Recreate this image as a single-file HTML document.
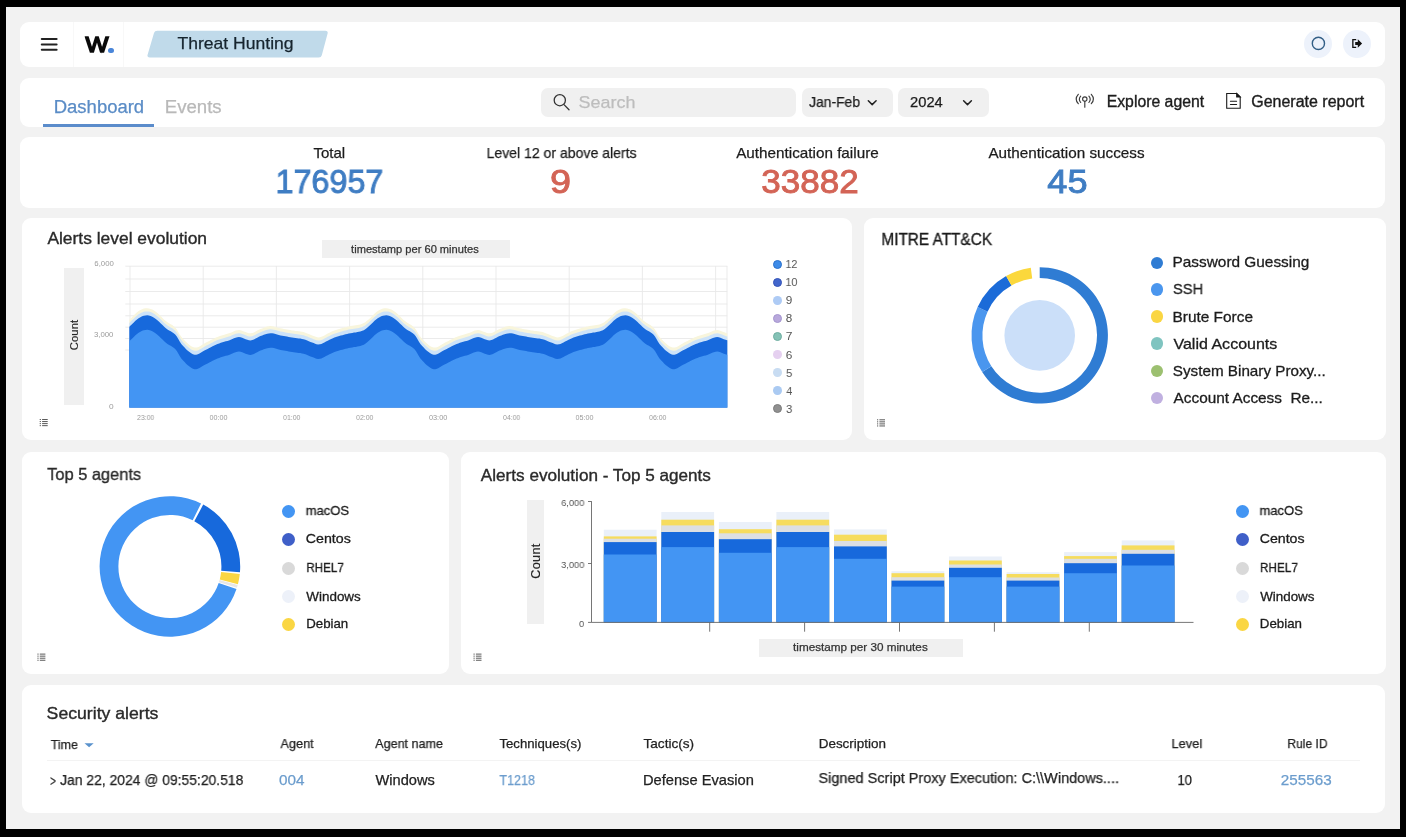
<!DOCTYPE html>
<html lang="en"><head><meta charset="utf-8"><title>Threat Hunting</title><style>
html,body{margin:0;padding:0;background:#000;}
body{width:1406px;height:837px;position:relative;overflow:hidden;font-family:"Liberation Sans",sans-serif;}
.b{position:absolute;display:block;}
.card{position:absolute;background:#fff;}
.t{position:absolute;white-space:pre;will-change:transform;transform-origin:0 0;}
</style></head>
<body>
<div class="b" style="left:6px;top:7px;width:1394px;height:822px;background:#f2f2f2"></div>
<header aria-label="Top bar">
<div class="card" style="left:20px;top:21.5px;width:1364.5px;height:45.5px;border-radius:9px"></div>
<svg class="b" style="left:38px;top:34px" width="24" height="22" viewBox="38 34 24 22">
<g stroke="#222" stroke-width="2.05" stroke-linecap="round"><line x1="41.8" y1="39" x2="56.6" y2="39"/><line x1="41.8" y1="44.4" x2="56.6" y2="44.4"/><line x1="41.8" y1="49.8" x2="56.6" y2="49.8"/></g></svg>
<div class="b" style="left:73.2px;top:22px;width:1px;height:45px;background:#f8f8f8;"></div>
<div class="b" style="left:123.4px;top:22px;width:1px;height:45px;background:#f8f8f8;"></div>
<div class="b" style="left:108.3px;top:47.8px;width:5.4px;height:5.4px;border-radius:50%;background:#4a86d9"></div>
<svg class="b" style="left:140px;top:26px" width="200" height="36" viewBox="140 26 200 36"><path d="M157.2 30.8 L325.5 30.8 Q328.3 30.8 327.6 33.4 L321.8 55.2 Q321.2 57.4 318.8 57.4 L149.6 57.4 Q146.8 57.4 147.6 54.8 L154 33 Q154.7 30.8 157.2 30.8 Z" fill="#c0daea"/></svg>
<div class="b" style="left:1304.2px;top:29.5px;width:28px;height:28px;border-radius:50%;background:#edf2fb"></div>
<div class="b" style="left:1343.4px;top:29.5px;width:28px;height:28px;border-radius:50%;background:#edf2fb"></div>
<svg class="b" style="left:1304px;top:29px" width="70" height="30" viewBox="1304 29 70 30">
<circle cx="1318.4" cy="43.4" r="6.1" fill="none" stroke="#335f86" stroke-width="1.4"/>
<path d="M1352.2 39 h4 v1.3 h-2.7 v6.4 h2.7 v1.3 h-4 z" fill="#111"/>
<path d="M1355.2 41.9 h2.6 v-2.6 l4.3 4.2 l-4.3 4.2 v-2.6 h-2.6 z" fill="#111"/>
</svg>
<span class="t" style="left:85px;top:33px;font-size:22.5px;line-height:23px;transform:translate(0.51px,0) scaleX(1.0796);-webkit-text-stroke:1.6px;color:#0a0a0a;">W</span>
<span class="t" style="left:177px;top:35px;font-size:17px;line-height:17px;transform:translate(0.50px,0) scaleX(1.0325);-webkit-text-stroke:0.25px;color:#16242e;">Threat Hunting</span>
</header>
<nav aria-label="Toolbar">
<div class="card" style="left:20px;top:78px;width:1364.5px;height:49px;border-radius:9px"></div>
<div class="b" style="left:42.6px;top:124px;width:111.2px;height:3px;background:#5b8ccb;"></div>
<div class="b" style="left:540.5px;top:87.5px;width:255.5px;height:29px;background:#f0f0f0;border-radius:7px;"></div>
<div class="b" style="left:801.7px;top:87.5px;width:91.1px;height:29px;background:#f0f0f0;border-radius:7px;"></div>
<div class="b" style="left:898px;top:87.5px;width:90.8px;height:29px;background:#f0f0f0;border-radius:7px;"></div>
<svg class="b" style="left:548px;top:90px" width="24" height="24" viewBox="548 90 24 24"><circle cx="559.8" cy="100.2" r="5.6" fill="none" stroke="#333" stroke-width="1.3"/><line x1="564" y1="104.6" x2="569" y2="109.8" stroke="#333" stroke-width="1.3" stroke-linecap="round"/></svg>
<svg class="b" style="left:860px;top:94px" width="120" height="16" viewBox="860 94 120 16"><g fill="none" stroke="#222" stroke-width="1.5" stroke-linecap="round" stroke-linejoin="round"><path d="M868.3 100.7 l3.9 3.9 l3.9 -3.9"/><path d="M963.6 100.7 l3.9 3.9 l3.9 -3.9"/></g></svg>
<svg class="b" style="left:1072px;top:90px" width="26" height="22" viewBox="1072 90 26 22"><g fill="none" stroke="#3c3c3c" stroke-width="1.15" stroke-linecap="round">
<circle cx="1084.8" cy="99" r="2.2"/><line x1="1084.8" y1="101.3" x2="1084.8" y2="107.2"/>
<path d="M1080.7 96.2 Q1078 99.3 1080.7 102.5"/><path d="M1088.9 96.2 Q1091.6 99.3 1088.9 102.5"/>
<path d="M1078.3 94.3 Q1074.1 99 1078.3 103.7"/><path d="M1091.3 94.3 Q1095.5 99 1091.3 103.7"/></g></svg>
<svg class="b" style="left:1222px;top:90px" width="24" height="24" viewBox="1222 90 24 24"><g fill="none" stroke="#1a1a1a" stroke-width="1.1" stroke-linejoin="miter" stroke-linecap="round">
<path d="M1226.7 93.5 H1236.7 L1240.2 97 V108.3 H1226.7 Z"/><path d="M1236.7 93.5 V97 H1240.2 Z" fill="#1a1a1a"/><line x1="1230.4" y1="101.3" x2="1236.6" y2="101.3"/><line x1="1230.4" y1="104.5" x2="1236.6" y2="104.5"/></g></svg>
<span class="t" style="left:53px;top:98px;font-size:18px;line-height:18px;transform:translate(0.76px,0) scaleX(1.0263);-webkit-text-stroke:0.25px;color:#5a8cc6;">Dashboard</span>
<span class="t" style="left:164px;top:98px;font-size:18px;line-height:18px;transform:translate(0.75px,0) scaleX(1.0331);-webkit-text-stroke:0.25px;color:#b9b9b9;">Events</span>
<span class="t" style="left:578px;top:94px;font-size:17px;line-height:17px;transform:translate(0.61px,0) scaleX(1.0547);-webkit-text-stroke:0.25px;color:#bdbdbd;">Search</span>
<span class="t" style="left:809px;top:95px;font-size:14.5px;line-height:15px;transform:translate(0.12px,0) scaleX(0.9552);-webkit-text-stroke:0.25px;color:#1c1c1c;">Jan-Feb</span>
<span class="t" style="left:910px;top:95px;font-size:14.5px;line-height:15px;transform:translate(0.04px,0) scaleX(1.0156);-webkit-text-stroke:0.25px;color:#1c1c1c;">2024</span>
<span class="t" style="left:1106px;top:94px;font-size:15.6px;line-height:16px;transform:translate(0.68px,0) scaleX(1.0127);-webkit-text-stroke:0.35px;color:#1c1c1c;">Explore agent</span>
<span class="t" style="left:1251px;top:94px;font-size:15.6px;line-height:16px;transform:translate(0.21px,0) scaleX(1.0253);-webkit-text-stroke:0.35px;color:#1c1c1c;">Generate report</span>
</nav>
<section aria-label="Summary statistics">
<div class="card" style="left:20px;top:137px;width:1364.5px;height:71px;border-radius:9px"></div>
<span class="t" style="left:313px;top:146px;font-size:14.8px;line-height:15px;transform:translate(0.44px,0) scaleX(1.0156);-webkit-text-stroke:0.25px;color:#1c1c1c;">Total</span>
<span class="t" style="left:275px;top:165px;font-size:33.6px;line-height:34px;transform:translate(0.53px,0) scaleX(0.9627);-webkit-text-stroke:0.9px;color:#3f7dc3;">176957</span>
<span class="t" style="left:486px;top:146px;font-size:14.8px;line-height:15px;transform:translate(0.55px,0) scaleX(0.9499);-webkit-text-stroke:0.25px;color:#1c1c1c;">Level 12 or above alerts</span>
<span class="t" style="left:549px;top:165px;font-size:33.6px;line-height:34px;transform:translate(0.88px,0) scaleX(1.1246);-webkit-text-stroke:0.9px;color:#d36456;">9</span>
<span class="t" style="left:736px;top:146px;font-size:14.8px;line-height:15px;transform:translate(0.14px,0) scaleX(1.0316);-webkit-text-stroke:0.25px;color:#1c1c1c;">Authentication failure</span>
<span class="t" style="left:761px;top:165px;font-size:33.6px;line-height:34px;transform:translate(0.33px,0) scaleX(1.0429);-webkit-text-stroke:0.9px;color:#d36456;">33882</span>
<span class="t" style="left:988px;top:146px;font-size:14.8px;line-height:15px;transform:translate(0.42px,0) scaleX(1.0315);-webkit-text-stroke:0.25px;color:#1c1c1c;">Authentication success</span>
<span class="t" style="left:1047px;top:165px;font-size:33.6px;line-height:34px;transform:translate(0.35px,0) scaleX(1.0765);-webkit-text-stroke:0.9px;color:#3f7dc3;">45</span>
</section>
<section aria-label="Alerts level evolution">
<div class="card" style="left:22px;top:218px;width:830.2px;height:222px;border-radius:9px"></div>
<svg class="b" style="left:37px;top:417px" width="14" height="12" viewBox="37 417 14 12"><g fill="#5a5a5a"><rect x="39.70" y="419.00" width="1.2" height="1"/><rect x="42.10" y="419.00" width="5.6" height="1"/><rect x="39.70" y="421.05" width="1.2" height="1"/><rect x="42.10" y="421.05" width="5.6" height="1"/><rect x="39.70" y="423.10" width="1.2" height="1"/><rect x="42.10" y="423.10" width="5.6" height="1"/><rect x="39.70" y="425.15" width="1.2" height="1"/><rect x="42.10" y="425.15" width="5.6" height="1"/></g></svg>
<svg class="b" style="left:60px;top:255px" width="700" height="175" viewBox="60 255 700 175"><defs><clipPath id="ac"><rect x="129.3" y="266" width="598.0" height="141.8"/></clipPath></defs><g stroke="#e9e9e9" stroke-width="0.9"><line x1="125.3" y1="266.2" x2="727.3" y2="266.2"/><line x1="125.3" y1="279" x2="727.3" y2="279"/><line x1="125.3" y1="291.5" x2="727.3" y2="291.5"/><line x1="125.3" y1="304" x2="727.3" y2="304"/><line x1="125.3" y1="315.8" x2="727.3" y2="315.8"/><line x1="125.3" y1="327.2" x2="727.3" y2="327.2"/><line x1="125.3" y1="338.5" x2="727.3" y2="338.5"/><line x1="125.3" y1="350" x2="727.3" y2="350"/><line x1="130" y1="266" x2="130" y2="407.8"/><line x1="203.2" y1="266" x2="203.2" y2="407.8"/><line x1="276.4" y1="266" x2="276.4" y2="407.8"/><line x1="349.6" y1="266" x2="349.6" y2="407.8"/><line x1="422.8" y1="266" x2="422.8" y2="407.8"/><line x1="496" y1="266" x2="496" y2="407.8"/><line x1="569.2" y1="266" x2="569.2" y2="407.8"/><line x1="642.4" y1="266" x2="642.4" y2="407.8"/><line x1="715.6" y1="266" x2="715.6" y2="407.8"/><line x1="727" y1="266" x2="727" y2="407.8"/></g><g clip-path="url(#ac)"><path d="M59.3 407.8 L73.0 335.4 L74.0 335.8 L75.4 336.4 L77.0 337.0 L78.9 337.3 L80.9 337.2 L82.3 336.8 L83.7 336.2 L85.3 335.4 L86.9 334.5 L88.6 333.6 L90.4 332.7 L92.1 331.8 L93.8 331.1 L95.3 330.5 L96.9 330.0 L98.5 329.5 L100.1 329.0 L101.7 328.5 L103.3 328.1 L104.9 327.6 L106.5 327.2 L108.1 326.8 L109.7 326.4 L111.4 326.1 L113.2 325.8 L114.9 325.5 L116.6 325.3 L118.3 325.0 L119.8 324.7 L121.2 324.4 L122.5 324.0 L124.7 323.1 L126.2 322.2 L127.5 321.1 L129.2 319.7 L130.6 318.4 L132.2 316.9 L133.8 315.3 L135.4 313.7 L137.0 312.3 L138.6 311.1 L140.4 310.1 L142.1 309.2 L143.8 308.6 L145.5 308.3 L147.2 308.2 L148.9 308.4 L150.6 308.9 L152.3 309.6 L154.0 310.6 L155.8 311.8 L157.4 313.1 L159.1 314.6 L160.8 316.3 L162.5 318.0 L164.2 319.7 L165.9 321.1 L167.5 322.3 L169.1 323.3 L170.7 324.2 L172.2 325.1 L173.7 326.2 L175.2 327.5 L176.8 329.5 L178.3 331.9 L179.7 334.4 L181.3 336.8 L183.1 339.0 L184.6 340.5 L186.1 342.1 L187.8 343.6 L189.5 345.0 L191.2 346.2 L192.9 347.1 L194.6 347.6 L196.2 347.6 L197.9 347.2 L199.5 346.4 L201.1 345.5 L202.7 344.5 L204.4 343.5 L206.0 342.6 L207.6 341.8 L209.3 341.0 L210.9 340.1 L212.6 339.2 L214.2 338.4 L215.9 337.6 L217.5 336.9 L219.2 336.3 L220.8 335.7 L222.5 335.2 L224.2 334.7 L225.8 334.2 L227.4 333.8 L229.0 333.3 L230.7 332.7 L232.4 331.9 L234.0 331.2 L235.6 330.6 L237.3 330.2 L239.0 330.0 L240.6 330.2 L242.2 330.7 L243.9 331.4 L245.6 332.1 L247.3 332.7 L248.9 333.2 L250.5 333.3 L252.3 333.0 L253.9 332.4 L255.6 331.5 L257.2 330.6 L258.9 329.7 L260.5 329.0 L262.2 328.4 L263.8 327.7 L265.5 327.1 L267.2 326.6 L268.8 326.3 L270.5 326.1 L272.2 326.2 L273.8 326.5 L275.5 326.9 L277.1 327.4 L278.8 327.9 L280.6 328.3 L282.2 328.6 L283.8 328.9 L285.4 329.2 L287.0 329.5 L288.7 329.8 L290.4 330.1 L292.0 330.4 L293.7 330.6 L295.4 330.9 L297.1 331.1 L298.8 331.3 L300.4 331.5 L302.0 331.8 L303.5 332.1 L305.4 332.7 L307.2 333.4 L308.8 334.1 L310.5 334.8 L312.1 335.4 L313.6 336.0 L315.1 336.6 L316.5 337.1 L318.1 337.4 L320.0 337.2 L321.4 336.8 L322.8 336.2 L324.4 335.4 L326.0 334.5 L327.7 333.6 L329.5 332.7 L331.2 331.8 L332.9 331.1 L334.4 330.5 L336.0 330.0 L337.6 329.5 L339.2 329.0 L340.8 328.5 L342.4 328.1 L344.0 327.6 L345.6 327.2 L347.2 326.8 L348.8 326.4 L350.5 326.1 L352.3 325.8 L354.0 325.5 L355.7 325.3 L357.4 325.0 L358.9 324.7 L360.3 324.4 L361.6 324.0 L363.8 323.1 L365.3 322.2 L366.6 321.1 L368.3 319.7 L369.7 318.4 L371.3 316.9 L372.9 315.3 L374.5 313.7 L376.1 312.3 L377.7 311.1 L379.5 310.1 L381.2 309.2 L382.9 308.6 L384.6 308.3 L386.3 308.2 L388.0 308.4 L389.7 308.9 L391.4 309.6 L393.1 310.6 L394.9 311.8 L396.5 313.1 L398.2 314.6 L399.9 316.3 L401.6 318.0 L403.3 319.7 L405.0 321.1 L406.6 322.3 L408.2 323.3 L409.8 324.2 L411.3 325.1 L412.8 326.2 L414.3 327.5 L415.9 329.5 L417.4 331.9 L418.8 334.4 L420.4 336.8 L422.2 339.0 L423.7 340.5 L425.2 342.1 L426.9 343.6 L428.6 345.0 L430.3 346.2 L432.0 347.1 L433.7 347.6 L435.3 347.6 L437.0 347.2 L438.6 346.4 L440.2 345.5 L441.8 344.5 L443.5 343.5 L445.1 342.6 L446.7 341.8 L448.4 341.0 L450.0 340.1 L451.7 339.2 L453.3 338.4 L455.0 337.6 L456.6 336.9 L458.3 336.3 L459.9 335.7 L461.6 335.2 L463.3 334.7 L464.9 334.2 L466.5 333.8 L468.1 333.3 L469.8 332.7 L471.5 331.9 L473.1 331.2 L474.7 330.6 L476.4 330.2 L478.1 330.0 L479.7 330.2 L481.3 330.7 L483.0 331.4 L484.7 332.1 L486.4 332.7 L488.0 333.2 L489.6 333.3 L491.4 333.0 L493.0 332.4 L494.7 331.5 L496.3 330.6 L498.0 329.7 L499.6 329.0 L501.3 328.4 L502.9 327.7 L504.6 327.1 L506.3 326.6 L507.9 326.3 L509.6 326.1 L511.3 326.2 L512.9 326.5 L514.6 326.9 L516.2 327.4 L517.9 327.9 L519.7 328.3 L521.3 328.6 L522.9 328.9 L524.5 329.2 L526.1 329.5 L527.8 329.8 L529.5 330.1 L531.1 330.4 L532.8 330.6 L534.5 330.9 L536.2 331.1 L537.9 331.3 L539.5 331.5 L541.1 331.8 L542.6 332.1 L544.5 332.7 L546.3 333.4 L547.9 334.1 L549.6 334.8 L551.2 335.4 L552.7 336.0 L554.2 336.6 L555.6 337.1 L557.2 337.4 L559.1 337.2 L560.5 336.8 L561.9 336.2 L563.5 335.4 L565.1 334.5 L566.8 333.6 L568.6 332.7 L570.3 331.8 L572.0 331.1 L573.5 330.5 L575.1 330.0 L576.7 329.5 L578.3 329.0 L579.9 328.5 L581.5 328.1 L583.1 327.6 L584.7 327.2 L586.3 326.8 L587.9 326.4 L589.6 326.1 L591.4 325.8 L593.1 325.5 L594.8 325.3 L596.5 325.0 L598.0 324.7 L599.4 324.4 L600.7 324.0 L602.9 323.1 L604.4 322.2 L605.7 321.1 L607.4 319.7 L608.8 318.4 L610.4 316.9 L612.0 315.3 L613.6 313.7 L615.2 312.3 L616.8 311.1 L618.6 310.1 L620.3 309.2 L622.0 308.6 L623.7 308.3 L625.4 308.2 L627.1 308.4 L628.8 308.9 L630.5 309.6 L632.2 310.6 L634.0 311.8 L635.6 313.1 L637.3 314.6 L639.0 316.3 L640.7 318.0 L642.4 319.7 L644.1 321.1 L645.7 322.3 L647.3 323.3 L648.9 324.2 L650.4 325.1 L651.9 326.2 L653.4 327.5 L655.0 329.5 L656.5 331.9 L657.9 334.4 L659.5 336.8 L661.3 339.0 L662.8 340.5 L664.3 342.1 L666.0 343.6 L667.7 345.0 L669.4 346.2 L671.1 347.1 L672.8 347.6 L674.4 347.6 L676.1 347.2 L677.7 346.4 L679.3 345.5 L680.9 344.5 L682.6 343.5 L684.2 342.6 L685.8 341.8 L687.5 341.0 L689.1 340.1 L690.8 339.2 L692.4 338.4 L694.1 337.6 L695.7 336.9 L697.4 336.3 L699.0 335.7 L700.7 335.2 L702.4 334.7 L704.0 334.2 L705.6 333.8 L707.2 333.3 L708.9 332.7 L710.6 331.9 L712.2 331.2 L713.8 330.6 L715.5 330.2 L717.2 330.0 L718.8 330.2 L720.4 330.7 L722.1 331.4 L723.8 332.1 L725.5 332.7 L727.1 333.2 L728.7 333.3 L730.5 333.0 L732.1 332.4 L733.8 331.5 L735.4 330.6 L737.1 329.7 L738.7 329.0 L740.4 328.4 L742.0 327.7 L743.7 327.1 L745.4 326.6 L747.0 326.3 L748.7 326.1 L750.4 326.2 L752.0 326.5 L753.7 326.9 L755.3 327.4 L757.0 327.9 L758.8 328.3 L760.4 328.6 L762.0 328.9 L763.6 329.2 L765.2 329.5 L766.9 329.8 L768.6 330.1 L770.2 330.4 L771.9 330.7 L773.8 331.0 L775.7 331.2 L777.6 331.5 L779.2 331.7 L780.7 331.9 L781.7 332.1 L797.3 407.8 Z" fill="#f8f5dc"/><path d="M59.3 407.8 L73.0 338.6 L74.0 339.0 L75.4 339.6 L77.0 340.2 L78.9 340.5 L80.9 340.4 L82.3 340.0 L83.7 339.4 L85.3 338.6 L86.9 337.7 L88.6 336.8 L90.4 335.9 L92.1 335.0 L93.8 334.3 L95.3 333.7 L96.9 333.2 L98.5 332.7 L100.1 332.2 L101.7 331.7 L103.3 331.3 L104.9 330.8 L106.5 330.4 L108.1 330.0 L109.7 329.6 L111.4 329.3 L113.2 329.0 L114.9 328.7 L116.6 328.5 L118.3 328.2 L119.8 327.9 L121.2 327.6 L122.5 327.2 L124.7 326.3 L126.2 325.4 L127.5 324.3 L129.2 322.9 L130.6 321.6 L132.2 320.1 L133.8 318.5 L135.4 316.9 L137.0 315.5 L138.6 314.3 L140.4 313.3 L142.1 312.4 L143.8 311.8 L145.5 311.5 L147.2 311.4 L148.9 311.6 L150.6 312.1 L152.3 312.8 L154.0 313.8 L155.8 315.0 L157.4 316.3 L159.1 317.8 L160.8 319.5 L162.5 321.2 L164.2 322.9 L165.9 324.3 L167.5 325.5 L169.1 326.5 L170.7 327.4 L172.2 328.3 L173.7 329.4 L175.2 330.7 L176.8 332.7 L178.3 335.1 L179.7 337.6 L181.3 340.0 L183.1 342.2 L184.6 343.7 L186.1 345.3 L187.8 346.8 L189.5 348.2 L191.2 349.4 L192.9 350.3 L194.6 350.8 L196.2 350.8 L197.9 350.4 L199.5 349.6 L201.1 348.7 L202.7 347.7 L204.4 346.7 L206.0 345.8 L207.6 345.0 L209.3 344.2 L210.9 343.3 L212.6 342.4 L214.2 341.6 L215.9 340.8 L217.5 340.1 L219.2 339.5 L220.8 338.9 L222.5 338.4 L224.2 337.9 L225.8 337.4 L227.4 337.0 L229.0 336.5 L230.7 335.9 L232.4 335.1 L234.0 334.4 L235.6 333.8 L237.3 333.4 L239.0 333.2 L240.6 333.4 L242.2 333.9 L243.9 334.6 L245.6 335.3 L247.3 335.9 L248.9 336.4 L250.5 336.5 L252.3 336.2 L253.9 335.6 L255.6 334.7 L257.2 333.8 L258.9 332.9 L260.5 332.2 L262.2 331.6 L263.8 330.9 L265.5 330.3 L267.2 329.8 L268.8 329.5 L270.5 329.3 L272.2 329.4 L273.8 329.7 L275.5 330.1 L277.1 330.6 L278.8 331.1 L280.6 331.5 L282.2 331.8 L283.8 332.1 L285.4 332.4 L287.0 332.7 L288.7 333.0 L290.4 333.3 L292.0 333.6 L293.7 333.8 L295.4 334.1 L297.1 334.3 L298.8 334.5 L300.4 334.7 L302.0 335.0 L303.5 335.3 L305.4 335.9 L307.2 336.6 L308.8 337.3 L310.5 338.0 L312.1 338.6 L313.6 339.2 L315.1 339.8 L316.5 340.3 L318.1 340.6 L320.0 340.4 L321.4 340.0 L322.8 339.4 L324.4 338.6 L326.0 337.7 L327.7 336.8 L329.5 335.9 L331.2 335.0 L332.9 334.3 L334.4 333.7 L336.0 333.2 L337.6 332.7 L339.2 332.2 L340.8 331.7 L342.4 331.3 L344.0 330.8 L345.6 330.4 L347.2 330.0 L348.8 329.6 L350.5 329.3 L352.3 329.0 L354.0 328.7 L355.7 328.5 L357.4 328.2 L358.9 327.9 L360.3 327.6 L361.6 327.2 L363.8 326.3 L365.3 325.4 L366.6 324.3 L368.3 322.9 L369.7 321.6 L371.3 320.1 L372.9 318.5 L374.5 316.9 L376.1 315.5 L377.7 314.3 L379.5 313.3 L381.2 312.4 L382.9 311.8 L384.6 311.5 L386.3 311.4 L388.0 311.6 L389.7 312.1 L391.4 312.8 L393.1 313.8 L394.9 315.0 L396.5 316.3 L398.2 317.8 L399.9 319.5 L401.6 321.2 L403.3 322.9 L405.0 324.3 L406.6 325.5 L408.2 326.5 L409.8 327.4 L411.3 328.3 L412.8 329.4 L414.3 330.7 L415.9 332.7 L417.4 335.1 L418.8 337.6 L420.4 340.0 L422.2 342.2 L423.7 343.7 L425.2 345.3 L426.9 346.8 L428.6 348.2 L430.3 349.4 L432.0 350.3 L433.7 350.8 L435.3 350.8 L437.0 350.4 L438.6 349.6 L440.2 348.7 L441.8 347.7 L443.5 346.7 L445.1 345.8 L446.7 345.0 L448.4 344.2 L450.0 343.3 L451.7 342.4 L453.3 341.6 L455.0 340.8 L456.6 340.1 L458.3 339.5 L459.9 338.9 L461.6 338.4 L463.3 337.9 L464.9 337.4 L466.5 337.0 L468.1 336.5 L469.8 335.9 L471.5 335.1 L473.1 334.4 L474.7 333.8 L476.4 333.4 L478.1 333.2 L479.7 333.4 L481.3 333.9 L483.0 334.6 L484.7 335.3 L486.4 335.9 L488.0 336.4 L489.6 336.5 L491.4 336.2 L493.0 335.6 L494.7 334.7 L496.3 333.8 L498.0 332.9 L499.6 332.2 L501.3 331.6 L502.9 330.9 L504.6 330.3 L506.3 329.8 L507.9 329.5 L509.6 329.3 L511.3 329.4 L512.9 329.7 L514.6 330.1 L516.2 330.6 L517.9 331.1 L519.7 331.5 L521.3 331.8 L522.9 332.1 L524.5 332.4 L526.1 332.7 L527.8 333.0 L529.5 333.3 L531.1 333.6 L532.8 333.8 L534.5 334.1 L536.2 334.3 L537.9 334.5 L539.5 334.7 L541.1 335.0 L542.6 335.3 L544.5 335.9 L546.3 336.6 L547.9 337.3 L549.6 338.0 L551.2 338.6 L552.7 339.2 L554.2 339.8 L555.6 340.3 L557.2 340.6 L559.1 340.4 L560.5 340.0 L561.9 339.4 L563.5 338.6 L565.1 337.7 L566.8 336.8 L568.6 335.9 L570.3 335.0 L572.0 334.3 L573.5 333.7 L575.1 333.2 L576.7 332.7 L578.3 332.2 L579.9 331.7 L581.5 331.3 L583.1 330.8 L584.7 330.4 L586.3 330.0 L587.9 329.6 L589.6 329.3 L591.4 329.0 L593.1 328.7 L594.8 328.5 L596.5 328.2 L598.0 327.9 L599.4 327.6 L600.7 327.2 L602.9 326.3 L604.4 325.4 L605.7 324.3 L607.4 322.9 L608.8 321.6 L610.4 320.1 L612.0 318.5 L613.6 316.9 L615.2 315.5 L616.8 314.3 L618.6 313.3 L620.3 312.4 L622.0 311.8 L623.7 311.5 L625.4 311.4 L627.1 311.6 L628.8 312.1 L630.5 312.8 L632.2 313.8 L634.0 315.0 L635.6 316.3 L637.3 317.8 L639.0 319.5 L640.7 321.2 L642.4 322.9 L644.1 324.3 L645.7 325.5 L647.3 326.5 L648.9 327.4 L650.4 328.3 L651.9 329.4 L653.4 330.7 L655.0 332.7 L656.5 335.1 L657.9 337.6 L659.5 340.0 L661.3 342.2 L662.8 343.7 L664.3 345.3 L666.0 346.8 L667.7 348.2 L669.4 349.4 L671.1 350.3 L672.8 350.8 L674.4 350.8 L676.1 350.4 L677.7 349.6 L679.3 348.7 L680.9 347.7 L682.6 346.7 L684.2 345.8 L685.8 345.0 L687.5 344.2 L689.1 343.3 L690.8 342.4 L692.4 341.6 L694.1 340.8 L695.7 340.1 L697.4 339.5 L699.0 338.9 L700.7 338.4 L702.4 337.9 L704.0 337.4 L705.6 337.0 L707.2 336.5 L708.9 335.9 L710.6 335.1 L712.2 334.4 L713.8 333.8 L715.5 333.4 L717.2 333.2 L718.8 333.4 L720.4 333.9 L722.1 334.6 L723.8 335.3 L725.5 335.9 L727.1 336.4 L728.7 336.5 L730.5 336.2 L732.1 335.6 L733.8 334.7 L735.4 333.8 L737.1 332.9 L738.7 332.2 L740.4 331.6 L742.0 330.9 L743.7 330.3 L745.4 329.8 L747.0 329.5 L748.7 329.3 L750.4 329.4 L752.0 329.7 L753.7 330.1 L755.3 330.6 L757.0 331.1 L758.8 331.5 L760.4 331.8 L762.0 332.1 L763.6 332.4 L765.2 332.7 L766.9 333.0 L768.6 333.3 L770.2 333.6 L771.9 333.9 L773.8 334.2 L775.7 334.4 L777.6 334.7 L779.2 334.9 L780.7 335.1 L781.7 335.3 L797.3 407.8 Z" fill="#cde3f9"/><path d="M59.3 407.8 L73.0 342.5 L74.0 342.9 L75.4 343.5 L77.0 344.1 L78.9 344.4 L80.9 344.3 L82.3 343.9 L83.7 343.3 L85.3 342.5 L86.9 341.6 L88.6 340.7 L90.4 339.8 L92.1 338.9 L93.8 338.2 L95.3 337.6 L96.9 337.1 L98.5 336.6 L100.1 336.1 L101.7 335.6 L103.3 335.2 L104.9 334.7 L106.5 334.3 L108.1 333.9 L109.7 333.5 L111.4 333.2 L113.2 332.9 L114.9 332.6 L116.6 332.4 L118.3 332.1 L119.8 331.8 L121.2 331.5 L122.5 331.1 L124.7 330.2 L126.2 329.3 L127.5 328.2 L129.2 326.8 L130.6 325.5 L132.2 324.0 L133.8 322.4 L135.4 320.8 L137.0 319.4 L138.6 318.2 L140.4 317.2 L142.1 316.3 L143.8 315.7 L145.5 315.4 L147.2 315.3 L148.9 315.5 L150.6 316.0 L152.3 316.7 L154.0 317.7 L155.8 318.9 L157.4 320.2 L159.1 321.7 L160.8 323.4 L162.5 325.1 L164.2 326.8 L165.9 328.2 L167.5 329.4 L169.1 330.4 L170.7 331.3 L172.2 332.2 L173.7 333.3 L175.2 334.6 L176.8 336.6 L178.3 339.0 L179.7 341.5 L181.3 343.9 L183.1 346.1 L184.6 347.6 L186.1 349.2 L187.8 350.7 L189.5 352.1 L191.2 353.3 L192.9 354.2 L194.6 354.7 L196.2 354.7 L197.9 354.3 L199.5 353.5 L201.1 352.6 L202.7 351.6 L204.4 350.6 L206.0 349.7 L207.6 348.9 L209.3 348.1 L210.9 347.2 L212.6 346.3 L214.2 345.5 L215.9 344.7 L217.5 344.0 L219.2 343.4 L220.8 342.8 L222.5 342.3 L224.2 341.8 L225.8 341.3 L227.4 340.9 L229.0 340.4 L230.7 339.8 L232.4 339.0 L234.0 338.3 L235.6 337.7 L237.3 337.3 L239.0 337.1 L240.6 337.3 L242.2 337.8 L243.9 338.5 L245.6 339.2 L247.3 339.8 L248.9 340.3 L250.5 340.4 L252.3 340.1 L253.9 339.5 L255.6 338.6 L257.2 337.7 L258.9 336.8 L260.5 336.1 L262.2 335.5 L263.8 334.8 L265.5 334.2 L267.2 333.7 L268.8 333.4 L270.5 333.2 L272.2 333.3 L273.8 333.6 L275.5 334.0 L277.1 334.5 L278.8 335.0 L280.6 335.4 L282.2 335.7 L283.8 336.0 L285.4 336.3 L287.0 336.6 L288.7 336.9 L290.4 337.2 L292.0 337.5 L293.7 337.7 L295.4 338.0 L297.1 338.2 L298.8 338.4 L300.4 338.6 L302.0 338.9 L303.5 339.2 L305.4 339.8 L307.2 340.5 L308.8 341.2 L310.5 341.9 L312.1 342.5 L313.6 343.1 L315.1 343.7 L316.5 344.2 L318.1 344.5 L320.0 344.3 L321.4 343.9 L322.8 343.3 L324.4 342.5 L326.0 341.6 L327.7 340.7 L329.5 339.8 L331.2 338.9 L332.9 338.2 L334.4 337.6 L336.0 337.1 L337.6 336.6 L339.2 336.1 L340.8 335.6 L342.4 335.2 L344.0 334.7 L345.6 334.3 L347.2 333.9 L348.8 333.5 L350.5 333.2 L352.3 332.9 L354.0 332.6 L355.7 332.4 L357.4 332.1 L358.9 331.8 L360.3 331.5 L361.6 331.1 L363.8 330.2 L365.3 329.3 L366.6 328.2 L368.3 326.8 L369.7 325.5 L371.3 324.0 L372.9 322.4 L374.5 320.8 L376.1 319.4 L377.7 318.2 L379.5 317.2 L381.2 316.3 L382.9 315.7 L384.6 315.4 L386.3 315.3 L388.0 315.5 L389.7 316.0 L391.4 316.7 L393.1 317.7 L394.9 318.9 L396.5 320.2 L398.2 321.7 L399.9 323.4 L401.6 325.1 L403.3 326.8 L405.0 328.2 L406.6 329.4 L408.2 330.4 L409.8 331.3 L411.3 332.2 L412.8 333.3 L414.3 334.6 L415.9 336.6 L417.4 339.0 L418.8 341.5 L420.4 343.9 L422.2 346.1 L423.7 347.6 L425.2 349.2 L426.9 350.7 L428.6 352.1 L430.3 353.3 L432.0 354.2 L433.7 354.7 L435.3 354.7 L437.0 354.3 L438.6 353.5 L440.2 352.6 L441.8 351.6 L443.5 350.6 L445.1 349.7 L446.7 348.9 L448.4 348.1 L450.0 347.2 L451.7 346.3 L453.3 345.5 L455.0 344.7 L456.6 344.0 L458.3 343.4 L459.9 342.8 L461.6 342.3 L463.3 341.8 L464.9 341.3 L466.5 340.9 L468.1 340.4 L469.8 339.8 L471.5 339.0 L473.1 338.3 L474.7 337.7 L476.4 337.3 L478.1 337.1 L479.7 337.3 L481.3 337.8 L483.0 338.5 L484.7 339.2 L486.4 339.8 L488.0 340.3 L489.6 340.4 L491.4 340.1 L493.0 339.5 L494.7 338.6 L496.3 337.7 L498.0 336.8 L499.6 336.1 L501.3 335.5 L502.9 334.8 L504.6 334.2 L506.3 333.7 L507.9 333.4 L509.6 333.2 L511.3 333.3 L512.9 333.6 L514.6 334.0 L516.2 334.5 L517.9 335.0 L519.7 335.4 L521.3 335.7 L522.9 336.0 L524.5 336.3 L526.1 336.6 L527.8 336.9 L529.5 337.2 L531.1 337.5 L532.8 337.7 L534.5 338.0 L536.2 338.2 L537.9 338.4 L539.5 338.6 L541.1 338.9 L542.6 339.2 L544.5 339.8 L546.3 340.5 L547.9 341.2 L549.6 341.9 L551.2 342.5 L552.7 343.1 L554.2 343.7 L555.6 344.2 L557.2 344.5 L559.1 344.3 L560.5 343.9 L561.9 343.3 L563.5 342.5 L565.1 341.6 L566.8 340.7 L568.6 339.8 L570.3 338.9 L572.0 338.2 L573.5 337.6 L575.1 337.1 L576.7 336.6 L578.3 336.1 L579.9 335.6 L581.5 335.2 L583.1 334.7 L584.7 334.3 L586.3 333.9 L587.9 333.5 L589.6 333.2 L591.4 332.9 L593.1 332.6 L594.8 332.4 L596.5 332.1 L598.0 331.8 L599.4 331.5 L600.7 331.1 L602.9 330.2 L604.4 329.3 L605.7 328.2 L607.4 326.8 L608.8 325.5 L610.4 324.0 L612.0 322.4 L613.6 320.8 L615.2 319.4 L616.8 318.2 L618.6 317.2 L620.3 316.3 L622.0 315.7 L623.7 315.4 L625.4 315.3 L627.1 315.5 L628.8 316.0 L630.5 316.7 L632.2 317.7 L634.0 318.9 L635.6 320.2 L637.3 321.7 L639.0 323.4 L640.7 325.1 L642.4 326.8 L644.1 328.2 L645.7 329.4 L647.3 330.4 L648.9 331.3 L650.4 332.2 L651.9 333.3 L653.4 334.6 L655.0 336.6 L656.5 339.0 L657.9 341.5 L659.5 343.9 L661.3 346.1 L662.8 347.6 L664.3 349.2 L666.0 350.7 L667.7 352.1 L669.4 353.3 L671.1 354.2 L672.8 354.7 L674.4 354.7 L676.1 354.3 L677.7 353.5 L679.3 352.6 L680.9 351.6 L682.6 350.6 L684.2 349.7 L685.8 348.9 L687.5 348.1 L689.1 347.2 L690.8 346.3 L692.4 345.5 L694.1 344.7 L695.7 344.0 L697.4 343.4 L699.0 342.8 L700.7 342.3 L702.4 341.8 L704.0 341.3 L705.6 340.9 L707.2 340.4 L708.9 339.8 L710.6 339.0 L712.2 338.3 L713.8 337.7 L715.5 337.3 L717.2 337.1 L718.8 337.3 L720.4 337.8 L722.1 338.5 L723.8 339.2 L725.5 339.8 L727.1 340.3 L728.7 340.4 L730.5 340.1 L732.1 339.5 L733.8 338.6 L735.4 337.7 L737.1 336.8 L738.7 336.1 L740.4 335.5 L742.0 334.8 L743.7 334.2 L745.4 333.7 L747.0 333.4 L748.7 333.2 L750.4 333.3 L752.0 333.6 L753.7 334.0 L755.3 334.5 L757.0 335.0 L758.8 335.4 L760.4 335.7 L762.0 336.0 L763.6 336.3 L765.2 336.6 L766.9 336.9 L768.6 337.2 L770.2 337.5 L771.9 337.8 L773.8 338.1 L775.7 338.3 L777.6 338.6 L779.2 338.8 L780.7 339.0 L781.7 339.2 L797.3 407.8 Z" fill="#1769dc"/><path d="M59.3 407.8 L73.0 357.0 L74.0 357.4 L75.4 358.0 L77.0 358.6 L78.9 358.9 L80.9 358.8 L82.3 358.4 L83.7 357.8 L85.3 357.0 L86.9 356.1 L88.6 355.2 L90.4 354.3 L92.1 353.4 L93.8 352.7 L95.3 352.1 L96.9 351.6 L98.5 351.1 L100.1 350.6 L101.7 350.1 L103.3 349.7 L104.9 349.2 L106.5 348.8 L108.1 348.4 L109.7 348.0 L111.4 347.7 L113.2 347.4 L114.9 347.1 L116.6 346.9 L118.3 346.6 L119.8 346.3 L121.2 346.0 L122.5 345.6 L124.7 344.7 L126.2 343.8 L127.5 342.7 L129.2 341.3 L130.6 340.0 L132.2 338.5 L133.8 336.9 L135.4 335.3 L137.0 333.9 L138.6 332.7 L140.4 331.7 L142.1 330.8 L143.8 330.2 L145.5 329.9 L147.2 329.8 L148.9 330.0 L150.6 330.5 L152.3 331.2 L154.0 332.2 L155.8 333.4 L157.4 334.7 L159.1 336.2 L160.8 337.9 L162.5 339.6 L164.2 341.3 L165.9 342.7 L167.5 343.9 L169.1 344.9 L170.7 345.8 L172.2 346.7 L173.7 347.8 L175.2 349.1 L176.8 351.1 L178.3 353.5 L179.7 356.0 L181.3 358.4 L183.1 360.6 L184.6 362.1 L186.1 363.7 L187.8 365.2 L189.5 366.6 L191.2 367.8 L192.9 368.7 L194.6 369.2 L196.2 369.2 L197.9 368.8 L199.5 368.0 L201.1 367.1 L202.7 366.1 L204.4 365.1 L206.0 364.2 L207.6 363.4 L209.3 362.6 L210.9 361.7 L212.6 360.8 L214.2 360.0 L215.9 359.2 L217.5 358.5 L219.2 357.9 L220.8 357.3 L222.5 356.8 L224.2 356.3 L225.8 355.8 L227.4 355.4 L229.0 354.9 L230.7 354.3 L232.4 353.5 L234.0 352.8 L235.6 352.2 L237.3 351.8 L239.0 351.6 L240.6 351.8 L242.2 352.3 L243.9 353.0 L245.6 353.7 L247.3 354.3 L248.9 354.8 L250.5 354.9 L252.3 354.6 L253.9 354.0 L255.6 353.1 L257.2 352.2 L258.9 351.3 L260.5 350.6 L262.2 350.0 L263.8 349.3 L265.5 348.7 L267.2 348.2 L268.8 347.9 L270.5 347.7 L272.2 347.8 L273.8 348.1 L275.5 348.5 L277.1 349.0 L278.8 349.5 L280.6 349.9 L282.2 350.2 L283.8 350.5 L285.4 350.8 L287.0 351.1 L288.7 351.4 L290.4 351.7 L292.0 352.0 L293.7 352.2 L295.4 352.5 L297.1 352.7 L298.8 352.9 L300.4 353.1 L302.0 353.4 L303.5 353.7 L305.4 354.3 L307.2 355.0 L308.8 355.7 L310.5 356.4 L312.1 357.0 L313.6 357.6 L315.1 358.2 L316.5 358.7 L318.1 359.0 L320.0 358.8 L321.4 358.4 L322.8 357.8 L324.4 357.0 L326.0 356.1 L327.7 355.2 L329.5 354.3 L331.2 353.4 L332.9 352.7 L334.4 352.1 L336.0 351.6 L337.6 351.1 L339.2 350.6 L340.8 350.1 L342.4 349.7 L344.0 349.2 L345.6 348.8 L347.2 348.4 L348.8 348.0 L350.5 347.7 L352.3 347.4 L354.0 347.1 L355.7 346.9 L357.4 346.6 L358.9 346.3 L360.3 346.0 L361.6 345.6 L363.8 344.7 L365.3 343.8 L366.6 342.7 L368.3 341.3 L369.7 340.0 L371.3 338.5 L372.9 336.9 L374.5 335.3 L376.1 333.9 L377.7 332.7 L379.5 331.7 L381.2 330.8 L382.9 330.2 L384.6 329.9 L386.3 329.8 L388.0 330.0 L389.7 330.5 L391.4 331.2 L393.1 332.2 L394.9 333.4 L396.5 334.7 L398.2 336.2 L399.9 337.9 L401.6 339.6 L403.3 341.3 L405.0 342.7 L406.6 343.9 L408.2 344.9 L409.8 345.8 L411.3 346.7 L412.8 347.8 L414.3 349.1 L415.9 351.1 L417.4 353.5 L418.8 356.0 L420.4 358.4 L422.2 360.6 L423.7 362.1 L425.2 363.7 L426.9 365.2 L428.6 366.6 L430.3 367.8 L432.0 368.7 L433.7 369.2 L435.3 369.2 L437.0 368.8 L438.6 368.0 L440.2 367.1 L441.8 366.1 L443.5 365.1 L445.1 364.2 L446.7 363.4 L448.4 362.6 L450.0 361.7 L451.7 360.8 L453.3 360.0 L455.0 359.2 L456.6 358.5 L458.3 357.9 L459.9 357.3 L461.6 356.8 L463.3 356.3 L464.9 355.8 L466.5 355.4 L468.1 354.9 L469.8 354.3 L471.5 353.5 L473.1 352.8 L474.7 352.2 L476.4 351.8 L478.1 351.6 L479.7 351.8 L481.3 352.3 L483.0 353.0 L484.7 353.7 L486.4 354.3 L488.0 354.8 L489.6 354.9 L491.4 354.6 L493.0 354.0 L494.7 353.1 L496.3 352.2 L498.0 351.3 L499.6 350.6 L501.3 350.0 L502.9 349.3 L504.6 348.7 L506.3 348.2 L507.9 347.9 L509.6 347.7 L511.3 347.8 L512.9 348.1 L514.6 348.5 L516.2 349.0 L517.9 349.5 L519.7 349.9 L521.3 350.2 L522.9 350.5 L524.5 350.8 L526.1 351.1 L527.8 351.4 L529.5 351.7 L531.1 352.0 L532.8 352.2 L534.5 352.5 L536.2 352.7 L537.9 352.9 L539.5 353.1 L541.1 353.4 L542.6 353.7 L544.5 354.3 L546.3 355.0 L547.9 355.7 L549.6 356.4 L551.2 357.0 L552.7 357.6 L554.2 358.2 L555.6 358.7 L557.2 359.0 L559.1 358.8 L560.5 358.4 L561.9 357.8 L563.5 357.0 L565.1 356.1 L566.8 355.2 L568.6 354.3 L570.3 353.4 L572.0 352.7 L573.5 352.1 L575.1 351.6 L576.7 351.1 L578.3 350.6 L579.9 350.1 L581.5 349.7 L583.1 349.2 L584.7 348.8 L586.3 348.4 L587.9 348.0 L589.6 347.7 L591.4 347.4 L593.1 347.1 L594.8 346.9 L596.5 346.6 L598.0 346.3 L599.4 346.0 L600.7 345.6 L602.9 344.7 L604.4 343.8 L605.7 342.7 L607.4 341.3 L608.8 340.0 L610.4 338.5 L612.0 336.9 L613.6 335.3 L615.2 333.9 L616.8 332.7 L618.6 331.7 L620.3 330.8 L622.0 330.2 L623.7 329.9 L625.4 329.8 L627.1 330.0 L628.8 330.5 L630.5 331.2 L632.2 332.2 L634.0 333.4 L635.6 334.7 L637.3 336.2 L639.0 337.9 L640.7 339.6 L642.4 341.3 L644.1 342.7 L645.7 343.9 L647.3 344.9 L648.9 345.8 L650.4 346.7 L651.9 347.8 L653.4 349.1 L655.0 351.1 L656.5 353.5 L657.9 356.0 L659.5 358.4 L661.3 360.6 L662.8 362.1 L664.3 363.7 L666.0 365.2 L667.7 366.6 L669.4 367.8 L671.1 368.7 L672.8 369.2 L674.4 369.2 L676.1 368.8 L677.7 368.0 L679.3 367.1 L680.9 366.1 L682.6 365.1 L684.2 364.2 L685.8 363.4 L687.5 362.6 L689.1 361.7 L690.8 360.8 L692.4 360.0 L694.1 359.2 L695.7 358.5 L697.4 357.9 L699.0 357.3 L700.7 356.8 L702.4 356.3 L704.0 355.8 L705.6 355.4 L707.2 354.9 L708.9 354.3 L710.6 353.5 L712.2 352.8 L713.8 352.2 L715.5 351.8 L717.2 351.6 L718.8 351.8 L720.4 352.3 L722.1 353.0 L723.8 353.7 L725.5 354.3 L727.1 354.8 L728.7 354.9 L730.5 354.6 L732.1 354.0 L733.8 353.1 L735.4 352.2 L737.1 351.3 L738.7 350.6 L740.4 350.0 L742.0 349.3 L743.7 348.7 L745.4 348.2 L747.0 347.9 L748.7 347.7 L750.4 347.8 L752.0 348.1 L753.7 348.5 L755.3 349.0 L757.0 349.5 L758.8 349.9 L760.4 350.2 L762.0 350.5 L763.6 350.8 L765.2 351.1 L766.9 351.4 L768.6 351.7 L770.2 352.0 L771.9 352.3 L773.8 352.6 L775.7 352.8 L777.6 353.1 L779.2 353.3 L780.7 353.5 L781.7 353.7 L797.3 407.8 Z" fill="#4395f3"/></g></svg>
<div class="b" style="left:64.4px;top:267.6px;width:19.2px;height:137px;background:#f0f0f0;"></div>
<span class="t" style="left:54.4px;top:328px;width:40px;height:14px;line-height:14px;font-size:11.2px;text-align:center;letter-spacing:0.1px;color:#222;-webkit-text-stroke:0.2px;transform:rotate(-90deg);transform-origin:50% 50%">Count</span>
<div class="b" style="left:322px;top:240px;width:187.5px;height:18.4px;background:#f0f0f0;"></div>
<div class="b" style="left:773.0px;top:259.9px;width:9px;height:9px;border-radius:50%;background:#3d8be8;box-sizing:border-box;border:1.4px solid #2a70cc"></div>
<div class="b" style="left:773.0px;top:278.0px;width:9px;height:9px;border-radius:50%;background:#4266cc;box-sizing:border-box;border:1.4px solid #3453b8"></div>
<div class="b" style="left:773.1px;top:296.1px;width:8.8px;height:8.8px;border-radius:50%;background:#aecbf5"></div>
<div class="b" style="left:773.0px;top:314.1px;width:9px;height:9px;border-radius:50%;background:#b8a8dc;box-sizing:border-box;border:1.4px solid #a596cf"></div>
<div class="b" style="left:773.0px;top:332.1px;width:9px;height:9px;border-radius:50%;background:#85c2b6;box-sizing:border-box;border:1.4px solid #6faea1"></div>
<div class="b" style="left:773.1px;top:350.3px;width:8.8px;height:8.8px;border-radius:50%;background:#e5d0f0"></div>
<div class="b" style="left:773.1px;top:368.4px;width:8.8px;height:8.8px;border-radius:50%;background:#c8dcf2"></div>
<div class="b" style="left:773.1px;top:386.4px;width:8.8px;height:8.8px;border-radius:50%;background:#aacaf2"></div>
<div class="b" style="left:773.0px;top:404.4px;width:9px;height:9px;border-radius:50%;background:#909090;box-sizing:border-box;border:1.4px solid #7c7c7c"></div>
<span class="t" style="left:47px;top:230px;font-size:16.5px;line-height:17px;transform:translate(0.39px,0) scaleX(1.0549);-webkit-text-stroke:0.35px;color:#2a2a2a;">Alerts level evolution</span>
<span class="t" style="left:351px;top:244px;font-size:10.8px;line-height:11px;transform:translate(0.12px,0) scaleX(1.0271);-webkit-text-stroke:0.25px;color:#333;">timestamp per 60 minutes</span>
<span class="t" style="left:94px;top:260px;font-size:7.6px;line-height:8px;transform:translate(0.32px,0) scaleX(1.0274);color:#9a9a9a;">6,000</span>
<span class="t" style="left:93px;top:331px;font-size:7.6px;line-height:8px;transform:translate(0.90px,0) scaleX(1.0297);color:#9a9a9a;">3,000</span>
<span class="t" style="left:109px;top:403px;font-size:8px;line-height:8px;transform:translate(0.00px,0) scaleX(1.0393);color:#9a9a9a;">0</span>
<span class="t" style="left:137px;top:414px;font-size:7px;line-height:7px;transform:translate(0.00px,0) scaleX(0.9840);color:#9a9a9a;">23:00</span>
<span class="t" style="left:209px;top:414px;font-size:7px;line-height:7px;transform:translate(0.46px,0) scaleX(1.0277);color:#9a9a9a;">00:00</span>
<span class="t" style="left:283px;top:414px;font-size:7px;line-height:7px;transform:translate(0.12px,0) scaleX(0.9876);color:#9a9a9a;">01:00</span>
<span class="t" style="left:356px;top:414px;font-size:7px;line-height:7px;transform:translate(0.12px,0) scaleX(0.9859);color:#9a9a9a;">02:00</span>
<span class="t" style="left:428px;top:414px;font-size:7px;line-height:7px;transform:translate(0.90px,0) scaleX(1.0531);color:#9a9a9a;">03:00</span>
<span class="t" style="left:503px;top:414px;font-size:7px;line-height:7px;transform:translate(0.00px,0) scaleX(0.9840);color:#9a9a9a;">04:00</span>
<span class="t" style="left:575px;top:414px;font-size:7px;line-height:7px;transform:translate(0.46px,0) scaleX(1.0277);color:#9a9a9a;">05:00</span>
<span class="t" style="left:649px;top:414px;font-size:7px;line-height:7px;transform:translate(0.12px,0) scaleX(0.9876);color:#9a9a9a;">06:00</span>
<span class="t" style="left:785px;top:258px;font-size:11.4px;line-height:12px;transform:translate(0.44px,0) scaleX(0.9437);color:#555;">12</span>
<span class="t" style="left:785px;top:276px;font-size:11.4px;line-height:12px;transform:translate(0.42px,0) scaleX(0.9507);color:#555;">10</span>
<span class="t" style="left:785px;top:294px;font-size:11.4px;line-height:12px;transform:translate(0.80px,0) scaleX(1.0336);color:#555;">9</span>
<span class="t" style="left:785px;top:312px;font-size:11.4px;line-height:12px;transform:translate(0.86px,0) scaleX(1.0249);color:#555;">8</span>
<span class="t" style="left:785px;top:330px;font-size:11.4px;line-height:12px;transform:translate(0.70px,0) scaleX(1.0578);color:#555;">7</span>
<span class="t" style="left:785px;top:349px;font-size:11.4px;line-height:12px;transform:translate(0.74px,0) scaleX(1.0433);color:#555;">6</span>
<span class="t" style="left:786px;top:367px;font-size:11.4px;line-height:12px;transform:translate(0.02px,0) scaleX(0.9999);color:#555;">5</span>
<span class="t" style="left:786px;top:385px;font-size:11.4px;line-height:12px;transform:translate(0.33px,0) scaleX(0.9475);color:#555;">4</span>
<span class="t" style="left:786px;top:403px;font-size:11.4px;line-height:12px;transform:translate(0.06px,0) scaleX(0.9931);color:#555;">3</span>
</section>
<section aria-label="MITRE ATT&amp;CK">
<div class="card" style="left:864px;top:218px;width:522px;height:222px;border-radius:9px"></div>
<svg class="b" style="left:875px;top:417px" width="14" height="12" viewBox="875 417 14 12"><g fill="#5a5a5a"><rect x="877.00" y="419.30" width="1.2" height="1"/><rect x="879.40" y="419.30" width="5.6" height="1"/><rect x="877.00" y="421.35" width="1.2" height="1"/><rect x="879.40" y="421.35" width="5.6" height="1"/><rect x="877.00" y="423.40" width="1.2" height="1"/><rect x="879.40" y="423.40" width="5.6" height="1"/><rect x="877.00" y="425.45" width="1.2" height="1"/><rect x="879.40" y="425.45" width="5.6" height="1"/></g></svg>
<svg class="b" style="left:960px;top:255px" width="160" height="160" viewBox="960 255 160 160"><circle cx="1039.7" cy="335.4" r="35.3" fill="#cbdff9"/><path d="M1039.70 267.20 A68.2 68.2 0 1 1 982.18 372.04 L991.37 366.19 A57.3 57.3 0 1 0 1039.70 278.10 Z" fill="#2f7cd3"/><path d="M982.18 372.04 A68.2 68.2 0 0 1 977.64 307.12 L987.56 311.64 A57.3 57.3 0 0 0 991.37 366.19 Z" fill="#4a96ee"/><path d="M977.64 307.12 A68.2 68.2 0 0 1 1006.12 276.04 L1011.48 285.53 A57.3 57.3 0 0 0 987.56 311.64 Z" fill="#1b6bd8"/><path d="M1006.12 276.04 A68.2 68.2 0 0 1 1030.80 267.78 L1032.22 278.59 A57.3 57.3 0 0 0 1011.48 285.53 Z" fill="#fbd83c"/></svg>
<div class="b" style="left:1150.8px;top:256.6px;width:12.6px;height:12.6px;border-radius:50%;background:#2f7cd3"></div>
<div class="b" style="left:1150.8px;top:283.4px;width:12.6px;height:12.6px;border-radius:50%;background:#4a96ee"></div>
<div class="b" style="left:1150.8px;top:310.1px;width:12.6px;height:12.6px;border-radius:50%;background:#fad643"></div>
<div class="b" style="left:1150.8px;top:337.2px;width:12.6px;height:12.6px;border-radius:50%;background:#7fc4c0"></div>
<div class="b" style="left:1150.8px;top:364.7px;width:12.6px;height:12.6px;border-radius:50%;background:#9cc070"></div>
<div class="b" style="left:1150.8px;top:391.8px;width:12.6px;height:12.6px;border-radius:50%;background:#c0b0e0"></div>
<span class="t" style="left:881px;top:232px;font-size:15.9px;line-height:16px;transform:translate(0.41px,0) scaleX(0.9658);-webkit-text-stroke:0.35px;color:#1a1a1a;">MITRE ATT&amp;CK</span>
<span class="t" style="left:1172px;top:254px;font-size:15px;line-height:15px;transform:translate(0.51px,0) scaleX(1.0257);-webkit-text-stroke:0.3px;color:#1c1c1c;">Password Guessing</span>
<span class="t" style="left:1172px;top:281px;font-size:15px;line-height:15px;transform:translate(0.92px,0) scaleX(0.9811);-webkit-text-stroke:0.3px;color:#1c1c1c;">SSH</span>
<span class="t" style="left:1172px;top:309px;font-size:15px;line-height:15px;transform:translate(0.50px,0) scaleX(1.0268);-webkit-text-stroke:0.3px;color:#1c1c1c;">Brute Force</span>
<span class="t" style="left:1173px;top:336px;font-size:15px;line-height:15px;transform:translate(0.46px,0) scaleX(1.0675);-webkit-text-stroke:0.3px;color:#1c1c1c;">Valid Accounts</span>
<span class="t" style="left:1172px;top:363px;font-size:15px;line-height:15px;transform:translate(0.83px,0) scaleX(1.0156);-webkit-text-stroke:0.3px;color:#1c1c1c;">System Binary Proxy...</span>
<span class="t" style="left:1173px;top:390px;font-size:15px;line-height:15px;transform:translate(0.61px,0) scaleX(1.0231);-webkit-text-stroke:0.3px;color:#1c1c1c;">Account Access  Re...</span>
</section>
<section aria-label="Top 5 agents">
<div class="card" style="left:22px;top:452px;width:427px;height:222px;border-radius:9px"></div>
<svg class="b" style="left:35px;top:651px" width="14" height="12" viewBox="35 651 14 12"><g fill="#5a5a5a"><rect x="37.40" y="653.60" width="1.2" height="1"/><rect x="39.80" y="653.60" width="5.6" height="1"/><rect x="37.40" y="655.65" width="1.2" height="1"/><rect x="39.80" y="655.65" width="5.6" height="1"/><rect x="37.40" y="657.70" width="1.2" height="1"/><rect x="39.80" y="657.70" width="5.6" height="1"/><rect x="37.40" y="659.75" width="1.2" height="1"/><rect x="39.80" y="659.75" width="5.6" height="1"/></g></svg>
<svg class="b" style="left:90px;top:490px" width="160" height="160" viewBox="90 490 160 160"><path d="M236.49 589.04 A70.3 70.3 0 1 1 201.05 503.48 L192.72 520.33 A51.5 51.5 0 1 0 218.68 583.01 Z" fill="#4395f3"/><path d="M203.23 504.60 A70.3 70.3 0 0 1 239.96 572.26 L221.23 570.72 A51.5 51.5 0 0 0 194.32 521.16 Z" fill="#1769dc"/><path d="M239.80 573.97 A70.3 70.3 0 0 1 237.93 584.22 L219.74 579.48 A51.5 51.5 0 0 0 221.11 571.97 Z" fill="#fad643"/><path d="M237.71 585.05 A70.3 70.3 0 0 1 236.87 587.87 L218.96 582.16 A51.5 51.5 0 0 0 219.57 580.09 Z" fill="#e6e6e6"/></svg>
<div class="b" style="left:282.2px;top:504.5px;width:13px;height:13px;border-radius:50%;background:#4395f3"></div>
<div class="b" style="left:282.2px;top:533.2px;width:13px;height:13px;border-radius:50%;background:#3f5fc8"></div>
<div class="b" style="left:282.2px;top:562.3px;width:13px;height:13px;border-radius:50%;background:#d9d9d9"></div>
<div class="b" style="left:282.2px;top:589.8px;width:13px;height:13px;border-radius:50%;background:#edf1f9"></div>
<div class="b" style="left:282.2px;top:617.5px;width:13px;height:13px;border-radius:50%;background:#fad643"></div>
<span class="t" style="left:47px;top:466px;font-size:16.5px;line-height:17px;transform:translate(0.18px,0) scaleX(0.9934);-webkit-text-stroke:0.35px;color:#2a2a2a;">Top 5 agents</span>
<span class="t" style="left:305px;top:504px;font-size:13.2px;line-height:14px;transform:translate(0.71px,0) scaleX(0.9839);-webkit-text-stroke:0.3px;color:#1c1c1c;">macOS</span>
<span class="t" style="left:305px;top:532px;font-size:13.2px;line-height:14px;transform:translate(0.72px,0) scaleX(1.0776);-webkit-text-stroke:0.3px;color:#1c1c1c;">Centos</span>
<span class="t" style="left:306px;top:561px;font-size:13.2px;line-height:14px;transform:translate(0.38px,0) scaleX(0.8799);-webkit-text-stroke:0.3px;color:#1c1c1c;">RHEL7</span>
<span class="t" style="left:306px;top:590px;font-size:13.2px;line-height:14px;transform:translate(0.36px,0) scaleX(1.0164);-webkit-text-stroke:0.3px;color:#1c1c1c;">Windows</span>
<span class="t" style="left:306px;top:617px;font-size:13.2px;line-height:14px;transform:translate(0.18px,0) scaleX(1.0063);-webkit-text-stroke:0.3px;color:#1c1c1c;">Debian</span>
</section>
<section aria-label="Alerts evolution - Top 5 agents">
<div class="card" style="left:461px;top:452px;width:925px;height:222px;border-radius:9px"></div>
<svg class="b" style="left:471px;top:651px" width="14" height="12" viewBox="471 651 14 12"><g fill="#5a5a5a"><rect x="473.50" y="653.60" width="1.2" height="1"/><rect x="475.90" y="653.60" width="5.6" height="1"/><rect x="473.50" y="655.65" width="1.2" height="1"/><rect x="475.90" y="655.65" width="5.6" height="1"/><rect x="473.50" y="657.70" width="1.2" height="1"/><rect x="475.90" y="657.70" width="5.6" height="1"/><rect x="473.50" y="659.75" width="1.2" height="1"/><rect x="475.90" y="659.75" width="5.6" height="1"/></g></svg>
<div class="b" style="left:1236.3px;top:504.5px;width:13px;height:13px;border-radius:50%;background:#4395f3"></div>
<div class="b" style="left:1236.3px;top:533.2px;width:13px;height:13px;border-radius:50%;background:#3f5fc8"></div>
<div class="b" style="left:1236.3px;top:562.3px;width:13px;height:13px;border-radius:50%;background:#d9d9d9"></div>
<div class="b" style="left:1236.3px;top:589.8px;width:13px;height:13px;border-radius:50%;background:#edf1f9"></div>
<div class="b" style="left:1236.3px;top:617.5px;width:13px;height:13px;border-radius:50%;background:#fad643"></div>
<svg class="b" style="left:580px;top:495px" width="630" height="145" viewBox="580 495 630 145"><rect x="603.8" y="529.7" width="52.8" height="92.7" fill="#eaf0f9"/><rect x="603.8" y="536.4" width="52.8" height="86.0" fill="#f6dc5e"/><rect x="603.8" y="538.7" width="52.8" height="83.7" fill="#dcdfe3"/><rect x="603.8" y="542.1" width="52.8" height="80.3" fill="#1769dc"/><rect x="603.8" y="554.5" width="52.8" height="67.9" fill="#4395f3"/><rect x="661.3" y="512" width="52.8" height="110.4" fill="#eaf0f9"/><rect x="661.3" y="519.7" width="52.8" height="102.7" fill="#f6dc5e"/><rect x="661.3" y="525.4" width="52.8" height="97.0" fill="#dcdfe3"/><rect x="661.3" y="532" width="52.8" height="90.4" fill="#1769dc"/><rect x="661.3" y="547.1" width="52.8" height="75.3" fill="#4395f3"/><rect x="718.9" y="522" width="52.8" height="100.4" fill="#eaf0f9"/><rect x="718.9" y="529.2" width="52.8" height="93.2" fill="#f6dc5e"/><rect x="718.9" y="533.3" width="52.8" height="89.1" fill="#dcdfe3"/><rect x="718.9" y="539.2" width="52.8" height="83.2" fill="#1769dc"/><rect x="718.9" y="552.8" width="52.8" height="69.6" fill="#4395f3"/><rect x="776.4" y="512" width="52.8" height="110.4" fill="#eaf0f9"/><rect x="776.4" y="519.7" width="52.8" height="102.7" fill="#f6dc5e"/><rect x="776.4" y="525.4" width="52.8" height="97.0" fill="#dcdfe3"/><rect x="776.4" y="532" width="52.8" height="90.4" fill="#1769dc"/><rect x="776.4" y="547.1" width="52.8" height="75.3" fill="#4395f3"/><rect x="834.0" y="529.4" width="52.8" height="93.0" fill="#eaf0f9"/><rect x="834.0" y="534.7" width="52.8" height="87.7" fill="#f6dc5e"/><rect x="834.0" y="541" width="52.8" height="81.4" fill="#dcdfe3"/><rect x="834.0" y="546.4" width="52.8" height="76.0" fill="#1769dc"/><rect x="834.0" y="558.8" width="52.8" height="63.6" fill="#4395f3"/><rect x="891.5" y="571.2" width="52.8" height="51.2" fill="#eaf0f9"/><rect x="891.5" y="573.2" width="52.8" height="49.2" fill="#f6dc5e"/><rect x="891.5" y="577.2" width="52.8" height="45.2" fill="#dcdfe3"/><rect x="891.5" y="580.6" width="52.8" height="41.8" fill="#1769dc"/><rect x="891.5" y="586.6" width="52.8" height="35.8" fill="#4395f3"/><rect x="949.0" y="556.5" width="52.8" height="65.9" fill="#eaf0f9"/><rect x="949.0" y="560.5" width="52.8" height="61.9" fill="#f6dc5e"/><rect x="949.0" y="564.5" width="52.8" height="57.9" fill="#dcdfe3"/><rect x="949.0" y="567.8" width="52.8" height="54.6" fill="#1769dc"/><rect x="949.0" y="577.2" width="52.8" height="45.2" fill="#4395f3"/><rect x="1006.6" y="572.2" width="52.8" height="50.2" fill="#eaf0f9"/><rect x="1006.6" y="574" width="52.8" height="48.4" fill="#f6dc5e"/><rect x="1006.6" y="577.5" width="52.8" height="44.9" fill="#dcdfe3"/><rect x="1006.6" y="580.6" width="52.8" height="41.8" fill="#1769dc"/><rect x="1006.6" y="586.6" width="52.8" height="35.8" fill="#4395f3"/><rect x="1064.1" y="552.1" width="52.8" height="70.3" fill="#eaf0f9"/><rect x="1064.1" y="556.1" width="52.8" height="66.3" fill="#f6dc5e"/><rect x="1064.1" y="558.8" width="52.8" height="63.6" fill="#dcdfe3"/><rect x="1064.1" y="563.2" width="52.8" height="59.2" fill="#1769dc"/><rect x="1064.1" y="573.2" width="52.8" height="49.2" fill="#4395f3"/><rect x="1121.7" y="540.4" width="52.8" height="82.0" fill="#eaf0f9"/><rect x="1121.7" y="545.4" width="52.8" height="77.0" fill="#f6dc5e"/><rect x="1121.7" y="549.8" width="52.8" height="72.6" fill="#dcdfe3"/><rect x="1121.7" y="553.8" width="52.8" height="68.6" fill="#1769dc"/><rect x="1121.7" y="565.5" width="52.8" height="56.9" fill="#4395f3"/><g stroke="#666" stroke-width="0.9" fill="none"><path d="M591.5 501.2 V622.4 H1193.5"/><line x1="588" y1="501.5" x2="591.5" y2="501.5"/><line x1="588" y1="563.5" x2="591.5" y2="563.5"/><line x1="588" y1="622.4" x2="591.5" y2="622.4"/><line x1="709.7" y1="622.4" x2="709.7" y2="631.7"/><line x1="804.6" y1="622.4" x2="804.6" y2="631.7"/><line x1="899.5" y1="622.4" x2="899.5" y2="631.7"/><line x1="994.4" y1="622.4" x2="994.4" y2="631.7"/><line x1="1089.3" y1="622.4" x2="1089.3" y2="631.7"/></g></svg>
<div class="b" style="left:527.2px;top:500.3px;width:17.1px;height:123.9px;background:#f0f0f0;"></div>
<span class="t" style="left:515.8px;top:554px;width:40px;height:14px;line-height:14px;font-size:12.6px;text-align:center;letter-spacing:0.35px;color:#222;-webkit-text-stroke:0.2px;transform:rotate(-90deg);transform-origin:50% 50%">Count</span>
<div class="b" style="left:758.5px;top:639px;width:204.9px;height:18px;background:#f0f0f0;"></div>
<span class="t" style="left:480px;top:467px;font-size:16.5px;line-height:17px;transform:translate(0.84px,0) scaleX(1.0380);-webkit-text-stroke:0.35px;color:#2a2a2a;">Alerts evolution - Top 5 agents</span>
<span class="t" style="left:1259px;top:504px;font-size:13.2px;line-height:14px;transform:translate(0.53px,0) scaleX(0.9826);-webkit-text-stroke:0.3px;color:#1c1c1c;">macOS</span>
<span class="t" style="left:1259px;top:532px;font-size:13.2px;line-height:14px;transform:translate(0.66px,0) scaleX(1.0738);-webkit-text-stroke:0.3px;color:#1c1c1c;">Centos</span>
<span class="t" style="left:1259px;top:561px;font-size:13.2px;line-height:14px;transform:translate(0.90px,0) scaleX(0.8947);-webkit-text-stroke:0.3px;color:#1c1c1c;">RHEL7</span>
<span class="t" style="left:1260px;top:590px;font-size:13.2px;line-height:14px;transform:translate(0.16px,0) scaleX(1.0155);-webkit-text-stroke:0.3px;color:#1c1c1c;">Windows</span>
<span class="t" style="left:1259px;top:617px;font-size:13.2px;line-height:14px;transform:translate(0.83px,0) scaleX(1.0096);-webkit-text-stroke:0.3px;color:#1c1c1c;">Debian</span>
<span class="t" style="left:561px;top:498px;font-size:9.6px;line-height:10px;transform:translate(0.24px,0) scaleX(0.9620);color:#555;">6,000</span>
<span class="t" style="left:561px;top:560px;font-size:9.6px;line-height:10px;transform:translate(0.16px,0) scaleX(0.9656);color:#555;">3,000</span>
<span class="t" style="left:579px;top:619px;font-size:9.6px;line-height:10px;transform:translate(0.03px,0) scaleX(0.9427);color:#555;">0</span>
<span class="t" style="left:793px;top:641px;font-size:11.3px;line-height:12px;transform:translate(0.12px,0) scaleX(1.0357);-webkit-text-stroke:0.25px;color:#333;">timestamp per 30 minutes</span>
</section>
<section aria-label="Security alerts">
<div class="card" style="left:22px;top:685px;width:1363.2px;height:128px;border-radius:9px"></div>
<svg class="b" style="left:84px;top:741px" width="12" height="8" viewBox="84 741 12 8"><path d="M84.5 743.3 h9.2 l-4.6 4 z" fill="#5a92cc"/></svg>
<div class="b" style="left:47px;top:760.2px;width:1313px;height:1px;background:#f3f3f3;"></div>
<span class="t" style="left:46px;top:705px;font-size:16.5px;line-height:17px;transform:translate(0.62px,0) scaleX(1.0696);-webkit-text-stroke:0.35px;color:#2a2a2a;">Security alerts</span>
<span class="t" style="left:50px;top:738px;font-size:13px;line-height:13px;transform:translate(0.73px,0) scaleX(0.9560);-webkit-text-stroke:0.25px;color:#222;">Time</span>
<span class="t" style="left:280px;top:737px;font-size:13px;line-height:13px;transform:translate(0.48px,0) scaleX(0.9749);-webkit-text-stroke:0.25px;color:#222;">Agent</span>
<span class="t" style="left:375px;top:737px;font-size:13px;line-height:13px;transform:translate(0.14px,0) scaleX(0.9695);-webkit-text-stroke:0.25px;color:#222;">Agent name</span>
<span class="t" style="left:499px;top:737px;font-size:13px;line-height:13px;transform:translate(0.46px,0) scaleX(1.0125);-webkit-text-stroke:0.25px;color:#222;">Techniques(s)</span>
<span class="t" style="left:643px;top:737px;font-size:13px;line-height:13px;transform:translate(0.46px,0) scaleX(1.0473);-webkit-text-stroke:0.25px;color:#222;">Tactic(s)</span>
<span class="t" style="left:818px;top:737px;font-size:13px;line-height:13px;transform:translate(0.70px,0) scaleX(1.0344);-webkit-text-stroke:0.25px;color:#222;">Description</span>
<span class="t" style="left:1171px;top:737px;font-size:13px;line-height:13px;transform:translate(0.42px,0) scaleX(0.9907);-webkit-text-stroke:0.25px;color:#222;">Level</span>
<span class="t" style="left:1287px;top:737px;font-size:13px;line-height:13px;transform:translate(0.31px,0) scaleX(0.9288);-webkit-text-stroke:0.25px;color:#222;">Rule ID</span>
<span class="t" style="left:50px;top:774px;font-size:14px;line-height:14px;transform:translate(0.08px,0) scaleX(0.7115);-webkit-text-stroke:0.2px;color:#333;">&gt;</span>
<span class="t" style="left:60px;top:773px;font-size:14.6px;line-height:15px;transform:translate(0.12px,0) scaleX(0.9514);-webkit-text-stroke:0.25px;color:#222;">Jan 22, 2024 @ 09:55:20.518</span>
<span class="t" style="left:279px;top:773px;font-size:14.6px;line-height:15px;transform:translate(0.07px,0) scaleX(1.0472);-webkit-text-stroke:0.25px;color:#6c9dcd;">004</span>
<span class="t" style="left:375px;top:773px;font-size:14.6px;line-height:15px;transform:translate(0.47px,0) scaleX(1.0034);-webkit-text-stroke:0.25px;color:#222;">Windows</span>
<span class="t" style="left:499px;top:773px;font-size:14.6px;line-height:15px;transform:translate(0.39px,0) scaleX(0.8585);-webkit-text-stroke:0.25px;color:#6c9dcd;">T1218</span>
<span class="t" style="left:642px;top:773px;font-size:14.6px;line-height:15px;transform:translate(0.90px,0) scaleX(1.0063);-webkit-text-stroke:0.25px;color:#222;">Defense Evasion</span>
<span class="t" style="left:818px;top:771px;font-size:14.6px;line-height:15px;transform:translate(0.49px,0) scaleX(0.9934);-webkit-text-stroke:0.25px;color:#222;">Signed Script Proxy Execution: C:\\Windows....</span>
<span class="t" style="left:1177px;top:773px;font-size:14.6px;line-height:15px;transform:translate(0.48px,0) scaleX(0.8947);-webkit-text-stroke:0.25px;color:#222;">10</span>
<span class="t" style="left:1280px;top:773px;font-size:14.6px;line-height:15px;transform:translate(0.79px,0) scaleX(1.0451);-webkit-text-stroke:0.25px;color:#6c9dcd;">255563</span>
</section>
</body></html>
